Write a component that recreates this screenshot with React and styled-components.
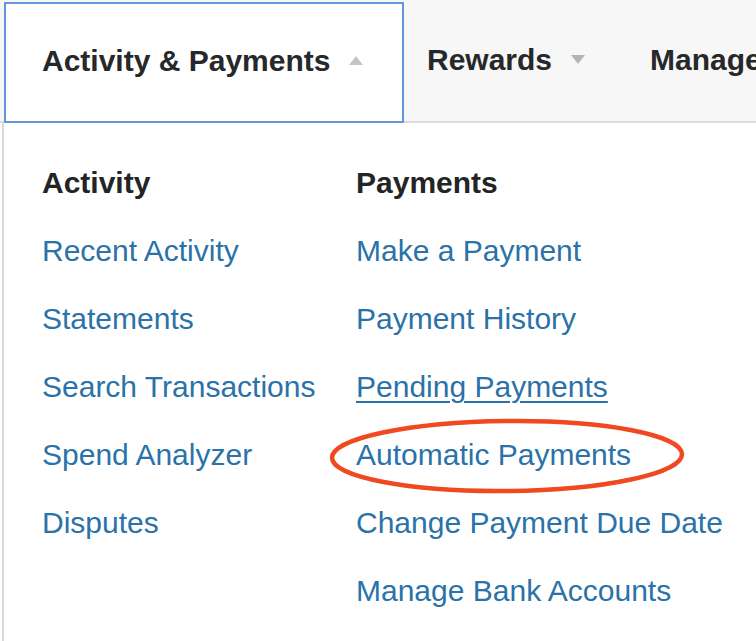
import React from 'react'
import styled, { createGlobalStyle } from 'styled-components'

const GlobalStyle = createGlobalStyle`
  html, body {
    margin: 0;
    padding: 0;
    background: #ffffff;
    font-family: "Liberation Sans", Arial, sans-serif;
  }
`

const activityLinks = ['Recent Activity', 'Statements', 'Search Transactions', 'Spend Analyzer', 'Disputes']
const paymentLinks = [
  { label: 'Make a Payment' },
  { label: 'Payment History' },
  { label: 'Pending Payments', hovered: true },
  { label: 'Automatic Payments', circled: true },
  { label: 'Change Payment Due Date' },
  { label: 'Manage Bank Accounts' },
]

const App = () => {
  return (
    <Page>
      <GlobalStyle />
      <NavBar>
        <ActiveTab>
          Activity &amp; Payments
          <Caret $up />
        </ActiveTab>
        <NavTab>
          Rewards
          <Caret />
        </NavTab>
        <NavTab>Manage</NavTab>
      </NavBar>
      <Dropdown>
        <Column>
          <Heading>Activity</Heading>
          {activityLinks.map((label) => (
            <MenuLink key={label} href="#">{label}</MenuLink>
          ))}
        </Column>
        <Column>
          <Heading>Payments</Heading>
          {paymentLinks.map((item) => (
            <MenuLink key={item.label} href="#" $hovered={item.hovered}>
              {item.label}
              {item.circled && <Circle />}
            </MenuLink>
          ))}
        </Column>
      </Dropdown>
    </Page>
  )
}

const Circle = () => (
  <CircleSvg viewBox="0 0 364 84" width="364" height="84">
    <ellipse
      cx="182"
      cy="42"
      rx="175"
      ry="35"
      fill="none"
      stroke="#f0481f"
      strokeWidth="4.5"
      transform="rotate(-0.6 182 42)"
    />
  </CircleSvg>
)

export default App

const Page = styled.div`
  position: relative;
  width: 756px;
  height: 641px;
  overflow: hidden;
  background: #ffffff;
`

const NavBar = styled.nav`
  display: flex;
  align-items: flex-start;
  height: 123px;
  box-sizing: border-box;
  background: #f7f7f7;
  border-bottom: 2px solid #dcdcdc;
  white-space: nowrap;
`

const ActiveTab = styled.div`
  display: flex;
  flex-shrink: 0;
  align-items: center;
  box-sizing: border-box;
  width: 400px;
  height: 121px;
  margin: 2px 0 0 4px;
  padding: 0 0 4px 36px;
  background: #ffffff;
  border: 2px solid #6494e2;
  font-size: 30px;
  font-weight: bold;
  color: #262829;
  position: relative;
  z-index: 1;
`

const NavTab = styled.div`
  display: flex;
  flex-shrink: 0;
  align-items: center;
  height: 119px;
  padding: 0 42px 4px 23px;
  font-size: 30px;
  font-weight: bold;
  color: #262829;
`

const Caret = styled.span`
  width: 0;
  height: 0;
  margin-left: 19px;
  border-left: 7.5px solid transparent;
  border-right: 7.5px solid transparent;
  ${({ $up }) => ($up
    ? 'border-bottom: 9px solid #c4c4c4;'
    : 'border-top: 9px solid #b4b4b4;')}
`

const Dropdown = styled.div`
  display: grid;
  grid-template-columns: 314px auto;
  margin-left: 2px;
  height: 518px;
  padding: 26px 0 0 38px;
  background: #ffffff;
  border-left: 2px solid #dadada;
`

const Column = styled.div`
  display: flex;
  flex-direction: column;
  align-items: flex-start;
`

const Heading = styled.h3`
  margin: 0;
  font-size: 30px;
  line-height: 68px;
  font-weight: bold;
  color: #222425;
`

const MenuLink = styled.a`
  position: relative;
  font-size: 30px;
  line-height: 68px;
  color: #2a72a8;
  text-decoration: ${({ $hovered }) => ($hovered ? 'underline' : 'none')};
  text-decoration-thickness: 2px;
  text-underline-offset: 4px;
  white-space: nowrap;
`

const CircleSvg = styled.svg`
  position: absolute;
  left: -31px;
  top: -7px;
  pointer-events: none;
  overflow: visible;
`
